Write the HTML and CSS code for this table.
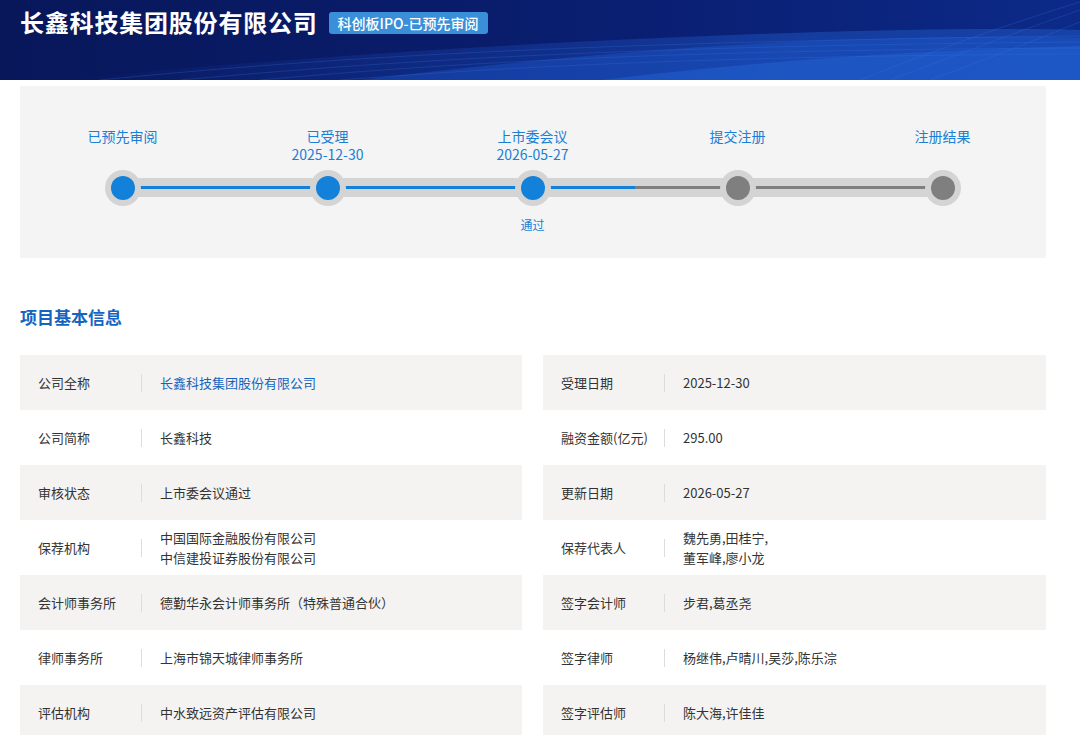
FILE: index.html
```html
<!DOCTYPE html>
<html lang="zh-CN">
<head>
<meta charset="utf-8">
<title>长鑫科技集团股份有限公司</title>
<link rel="stylesheet" href="styles.css">
</head>
<body>
<header class="hero">
  <svg class="hero-bg" width="1080" height="80" viewBox="0 0 1080 80" preserveAspectRatio="none" aria-hidden="true">
    <defs>
      <linearGradient id="bg" x1="0" y1="0" x2="1" y2="0">
        <stop offset="0" stop-color="#08175a"/>
        <stop offset="0.6" stop-color="#0a1f72"/>
        <stop offset="1" stop-color="#0c2a88"/>
      </linearGradient>
      <linearGradient id="wave" x1="0" y1="0" x2="1" y2="0">
        <stop offset="0" stop-color="#1a45b8" stop-opacity="0"/>
        <stop offset="0.3" stop-color="#1c4fc4" stop-opacity="0.5"/>
        <stop offset="0.7" stop-color="#2464d8" stop-opacity="0.85"/>
        <stop offset="1" stop-color="#2a6de0" stop-opacity="0.8"/>
      </linearGradient>
    </defs>
    <rect width="1080" height="80" fill="url(#bg)"/>
    <path d="M60 80 C 300 56, 560 40, 820 32 C 930 29, 1010 28, 1080 30 L1080 80 Z" fill="url(#wave)" opacity="0.45"/>
    <path d="M360 80 C 540 58, 720 42, 900 38 C 980 36, 1040 36, 1080 38 L1080 80 Z" fill="#1f5bd0" opacity="0.4"/>
    <path d="M600 80 C 720 66, 860 52, 1080 46 L1080 80 Z" fill="#2466d8" opacity="0.45"/>
    <g fill="none" stroke="#3a7ae6" stroke-width="0.7" opacity="0.35">
      <path d="M100 80 C 320 58, 580 42, 1080 36"/>
      <path d="M180 80 C 400 60, 630 46, 1080 42"/>
      <path d="M260 80 C 460 62, 680 50, 1080 48"/>
      <path d="M340 80 C 520 66, 720 56, 1080 54"/>
      <path d="M860 80 C 920 56, 990 30, 1080 2"/>
      <path d="M890 80 C 950 58, 1010 34, 1080 10"/>
      <path d="M930 80 C 980 62, 1030 42, 1080 22"/>
    </g>
  </svg>
  <div class="hero-inner">
    <h1 class="hero-title">长鑫科技集团股份有限公司</h1>
    <span class="badge">科创板IPO-已预先审阅</span>
  </div>
</header>

<main class="page">
  <section class="steps-panel">
    <div class="steps">
      <div class="step-label s1">已预先审阅</div>
      <div class="step-label s2">已受理<br>2025-12-30</div>
      <div class="step-label s3">上市委会议<br>2026-05-27</div>
      <div class="step-label s4">提交注册</div>
      <div class="step-label s5">注册结果</div>

      <div class="track"><div class="track-progress"></div></div>

      <div class="node done s1"><span></span></div>
      <div class="node done s2"><span></span></div>
      <div class="node done s3"><span></span></div>
      <div class="node todo s4"><span></span></div>
      <div class="node todo s5"><span></span></div>

      <div class="step-note s3">通过</div>
    </div>
  </section>

  <h2 class="section-title">项目基本信息</h2>

  <div class="info-grid">
    <div class="cell shade"><div class="k">公司全称</div><div class="v link">长鑫科技集团股份有限公司</div></div>
    <div class="cell shade"><div class="k">受理日期</div><div class="v">2025-12-30</div></div>

    <div class="cell"><div class="k">公司简称</div><div class="v">长鑫科技</div></div>
    <div class="cell"><div class="k">融资金额(亿元)</div><div class="v">295.00</div></div>

    <div class="cell shade"><div class="k">审核状态</div><div class="v">上市委会议通过</div></div>
    <div class="cell shade"><div class="k">更新日期</div><div class="v">2026-05-27</div></div>

    <div class="cell"><div class="k">保荐机构</div><div class="v">中国国际金融股份有限公司<br>中信建投证券股份有限公司</div></div>
    <div class="cell"><div class="k">保荐代表人</div><div class="v">魏先勇,田桂宁,<br>董军峰,廖小龙</div></div>

    <div class="cell shade"><div class="k">会计师事务所</div><div class="v">德勤华永会计师事务所（特殊普通合伙）</div></div>
    <div class="cell shade"><div class="k">签字会计师</div><div class="v">步君,葛丞尧</div></div>

    <div class="cell"><div class="k">律师事务所</div><div class="v">上海市锦天城律师事务所</div></div>
    <div class="cell"><div class="k">签字律师</div><div class="v">杨继伟,卢晴川,吴莎,陈乐淙</div></div>

    <div class="cell shade"><div class="k">评估机构</div><div class="v">中水致远资产评估有限公司</div></div>
    <div class="cell shade"><div class="k">签字评估师</div><div class="v">陈大海,许佳佳</div></div>
  </div>
</main>
</body>
</html>
```

FILE: styles.css
```css
* { box-sizing: border-box; }

html, body {
  margin: 0;
  padding: 0;
  background: #ffffff;
  font-family: "Noto Sans CJK SC", "Noto Sans", "Liberation Sans", sans-serif;
  color: #333333;
}

.hero {
  position: relative;
  height: 80px;
  overflow: hidden;
  background: #08175a;
}

.hero-bg {
  position: absolute;
  left: 0;
  top: 0;
  display: block;
}

.hero-inner {
  position: relative;
  display: flex;
  align-items: center;
  gap: 11px;
  padding: 6px 0 0 20px;
}

.hero-title {
  margin: 0;
  font-size: 24px;
  line-height: 32px;
  font-weight: 600;
  color: #ffffff;
  letter-spacing: 0.8px;
}

.badge {
  display: inline-block;
  height: 22px;
  line-height: 22px;
  padding: 0 9px;
  border-radius: 3px;
  background: #3a8fd9;
  color: #ffffff;
  font-size: 14px;
  font-weight: 500;
  margin-top: 1px;
}

.page {
  width: 1026px;
  margin-left: 20px;
  padding-top: 6px;
}

.steps-panel {
  background: #f4f4f4;
  height: 172px;
  padding-top: 41px;
}

.steps {
  display: grid;
  grid-template-columns: repeat(5, 205px);
  grid-template-rows: 36px 50px auto;
}

.step-label {
  grid-row: 1;
  text-align: center;
  font-size: 14px;
  line-height: 18px;
  color: #1a7fd6;
}

.s1 { grid-column: 1; }
.s2 { grid-column: 2; }
.s3 { grid-column: 3; }
.s4 { grid-column: 4; }
.s5 { grid-column: 5; }

.track {
  grid-row: 2;
  grid-column: 1 / -1;
  align-self: start;
  margin: 15px 102px 0 102px;
  height: 19px;
  background: #d4d4d4;
  display: flex;
  align-items: center;
}

.track-progress {
  width: 100%;
  height: 3px;
  background: linear-gradient(to right, #1380d9 0, #1380d9 513px, #7f7f7f 513px, #7f7f7f 100%);
}

.node {
  grid-row: 2;
  align-self: start;
  justify-self: center;
  margin-top: 7px;
  width: 36px;
  height: 36px;
  border-radius: 50%;
  background: #d4d4d4;
  display: flex;
  align-items: center;
  justify-content: center;
  z-index: 1;
}

.node span {
  width: 24px;
  height: 24px;
  border-radius: 50%;
  display: block;
}

.node.done span { background: #1380d9; }
.node.todo span { background: #7f7f7f; }

.step-note {
  grid-row: 3;
  margin-top: 4px;
  text-align: center;
  font-size: 12px;
  line-height: 16px;
  color: #1a7fd6;
}

.section-title {
  margin: 47px 0 0 0;
  font-size: 17px;
  line-height: 24px;
  font-weight: 700;
  color: #1565c0;
}

.info-grid {
  margin-top: 26px;
  display: grid;
  grid-template-columns: 502px 503px;
  column-gap: 21px;
  grid-auto-rows: 55px;
}

.cell {
  display: flex;
  align-items: center;
  padding-left: 18px;
  font-size: 13px;
  line-height: 20px;
  color: #333333;
}

.cell.shade { background: #f4f3f2; }

.k {
  width: 104px;
  flex: none;
  position: relative;
  height: 20px;
  white-space: nowrap;
}

.k::after {
  content: "";
  position: absolute;
  right: 0;
  top: 1px;
  width: 1px;
  height: 18px;
  background: #dedcda;
}

.v {
  padding-left: 18px;
}

.v.link { color: #1565c0; }
```
